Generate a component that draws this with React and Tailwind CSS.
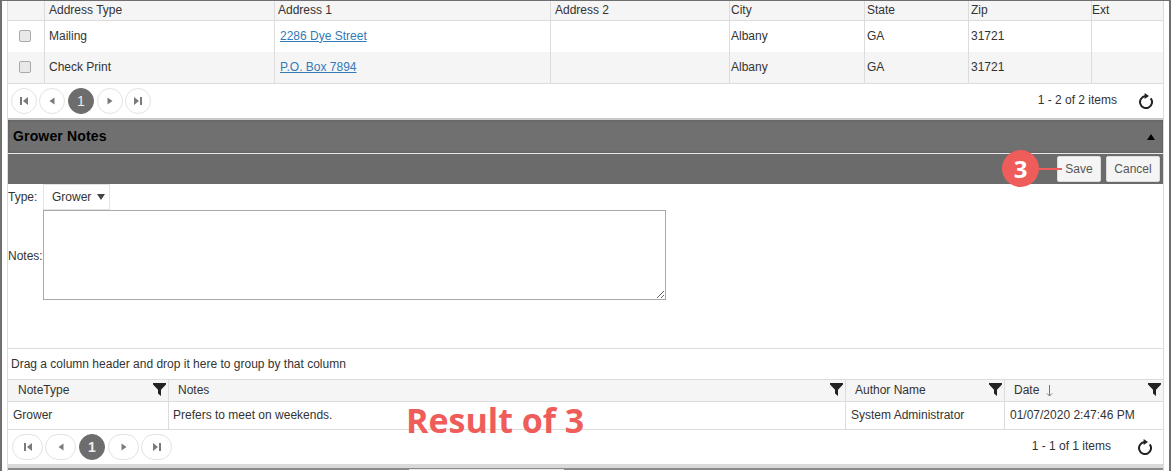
import React from "react";

const Pg = ({ kind }) => {
  const paths = {
    first: <><rect x="2" y="2" width="2" height="8" /><path d="M10 2v8L5 6z" /></>,
    prev: <path d="M8.5 2.5v7L3.5 6z" />,
    next: <path d="M3.5 2.5v7L8.5 6z" />,
    last: <><rect x="8" y="2" width="2" height="8" /><path d="M2 2v8l5-4z" /></>,
  };
  return (
    <svg width="12" height="12" viewBox="0 0 12 12" className="fill-[#7a7a7a]">
      {paths[kind]}
    </svg>
  );
};

const Refresh = () => (
  <svg width="16" height="16" viewBox="0 0 16 16" fill="none" className="stroke-[#222]">
    <path d="M7.5 3.1A6 6 0 1 0 12.7 5.3" strokeWidth="2" />
    <path d="M6.6 0v6l4.4-3z" className="fill-[#222]" stroke="none" />
  </svg>
);

const Funnel = () => (
  <svg width="13" height="13" viewBox="0 0 13 13" className="fill-[#222]">
    <path d="M0 0h13v1.6L8 6.8V13L5 10.6V6.8L0 1.6z" />
  </svg>
);

const PagerBtn = ({ children, w, active, bold }) => (
  <span
    className={`flex h-[26px] items-center justify-center rounded-full border text-sm ${
      active ? "border-[#6d6d6d] bg-[#6d6d6d] text-[#eee]" : "border-[#e3e3e3] bg-white"
    } ${bold ? "font-bold" : "font-normal"}`}
    style={{ width: w }}
  >
    {children}
  </span>
);

const Pager = ({ label, widths, bold, className, labelClass, refreshClass }) => (
  <div className={`flex h-[35px] items-center border-t border-[#dcdcdc] ${className}`}>
    <PagerBtn w={widths[0]}><Pg kind="first" /></PagerBtn>
    <span className="w-[2px]" />
    <PagerBtn w={widths[1]}><Pg kind="prev" /></PagerBtn>
    <span className="w-[3px]" />
    <PagerBtn w={26} active bold={bold}>1</PagerBtn>
    <span className="w-[3px]" />
    <PagerBtn w={widths[2]}><Pg kind="next" /></PagerBtn>
    <span className="w-[2px]" />
    <PagerBtn w={widths[3]}><Pg kind="last" /></PagerBtn>
    <span className={`ml-auto pb-[2px] text-xs text-[#333] ${labelClass}`}>{label}</span>
    <span className={`flex ${refreshClass}`}><Refresh /></span>
  </div>
);

const addrCols = "grid grid-cols-[37px_230px_276px_179px_135px_104px_123px_1fr]";
const cell = "flex items-center border-r border-[#dcdcdc] last:border-r-0";

const Checkbox = () => (
  <span className="mx-auto block h-3 w-3 rounded-[2px] border border-[#a9a9a9] bg-[#e9e9e9]" />
);

const AddrRow = ({ type, addr, bg }) => (
  <div className={`${addrCols} h-[31px] text-xs text-[#333] ${bg}`}>
    <div className={`${cell} pr-[2px] pb-[2px]`}><Checkbox /></div>
    <div className={`${cell} pb-[2px] pl-[4px]`}>{type}</div>
    <div className={`${cell} pb-[2px] pl-[5px]`}>
      <a href="#" className="text-[#337ab7] underline">{addr}</a>
    </div>
    <div className={cell} />
    <div className={`${cell} pb-[2px] pl-[1px]`}>Albany</div>
    <div className={`${cell} pb-[2px] pl-[2px]`}>GA</div>
    <div className={`${cell} pb-[2px] pl-[2px]`}>31721</div>
    <div className={cell} />
  </div>
);

const noteCols = "grid grid-cols-[161px_677px_159px_1fr]";

const NoteHead = ({ children, last, first }) => (
  <div className={`flex items-center ${last ? "" : "border-r border-[#dcdcdc]"} ${first ? "pl-[10px]" : "pl-[9px]"} pr-[2px]`}>
    <span className="flex-1 pb-[2px]">{children}</span>
    <span className="-mt-[2px] flex"><Funnel /></span>
  </div>
);

export default function App() {
  return (
    <div className="relative h-[471px] w-[1171px] overflow-hidden border-x-2 border-t border-[#6f6f6f] bg-white font-['Liberation_Sans',Arial,sans-serif]">
      <div className="mx-[5px] h-[470px] border-x border-[#dcdcdc]">
        <div className={`${addrCols} h-[20px] border-b border-[#dcdcdc] bg-[#f5f5f5] text-xs text-[#333]`}>
          <div className={cell} />
          <div className={`${cell} pb-[2px] pl-[4px]`}>Address Type</div>
          <div className={`${cell} pb-[2px] pl-[3px]`}>Address 1</div>
          <div className={`${cell} pb-[2px] pl-[4px]`}>Address 2</div>
          <div className={`${cell} pb-[2px] pl-[1px]`}>City</div>
          <div className={`${cell} pb-[2px] pl-[2px]`}>State</div>
          <div className={`${cell} pb-[2px] pl-[2px]`}>Zip</div>
          <div className={`${cell} pb-[2px]`}>Ext</div>
        </div>
        <AddrRow type="Mailing" addr="2286 Dye Street" bg="bg-white" />
        <AddrRow type="Check Print" addr="P.O. Box 7894" bg="bg-[#f5f5f5]" />
        <Pager
          label="1 - 2 of 2 items"
          widths={[26, 26, 26, 26]}
          className="pl-[3px]"
          labelClass="mr-[21px]"
          refreshClass="mr-[9px]"
        />
        <div className="flex h-[35px] items-center justify-between border-t-2 border-[#c9c9c9] bg-[#707070] pl-[5px] pr-[8px] shadow-[inset_0_0_3px_#555]">
          <span className="pb-[2px] text-sm font-bold tracking-[0.15px] text-black">Grower Notes</span>
          <svg width="8" height="6" viewBox="0 0 8 6" className="fill-black"><path d="M4 0l4 6H0z" /></svg>
        </div>
        <div className="flex h-[31px] items-center justify-end gap-[5px] border-t border-[#e8e8e8] bg-[#6b6b6b] pr-[3px]">
          <button className="h-[26px] w-[44px] rounded-[2px] border border-[#dcdcdc] bg-[#f5f5f5] text-xs text-[#555]">Save</button>
          <button className="h-[26px] w-[54px] rounded-[2px] border border-[#dcdcdc] bg-[#f5f5f5] text-xs text-[#555]">Cancel</button>
        </div>
        <div className="flex h-[26px] items-center text-xs text-[#333]">
          <span className="w-[35px]">Type:</span>
          <span className="flex h-[26px] w-[67px] items-center border border-[#e3e3e3] pl-[8px]">
            Grower
            <svg width="8" height="6" viewBox="0 0 8 6" className="ml-[6px] fill-[#444]"><path d="M0 0h8L4 6z" /></svg>
          </span>
        </div>
        <div className="flex h-[90px] items-center text-xs text-[#333]">
          <span className="w-[35px] pt-[2px]">Notes:</span>
          <textarea className="h-[90px] w-[623px] resize border border-[#a9a9a9] bg-white" readOnly />
        </div>
        <div className="h-[48px]" />
        <div className="flex h-[31px] items-center border-t border-[#dcdcdc] pl-[3px] text-xs text-[#333]">
          Drag a column header and drop it here to group by that column
        </div>
        <div className={`${noteCols} h-[23px] border-y border-[#dcdcdc] bg-[#f5f5f5] text-xs text-[#333]`}>
          <NoteHead first>NoteType</NoteHead>
          <NoteHead>Notes</NoteHead>
          <NoteHead>Author Name</NoteHead>
          <NoteHead last>
            <span className="flex items-center">
              Date
              <svg width="9" height="12" viewBox="0 0 9 12" fill="none" className="ml-[6px] mt-[3px] stroke-[#777]">
                <path d="M4.5 0v11M2 8.5l2.5 2.5L7 8.5" />
              </svg>
            </span>
          </NoteHead>
        </div>
        <div className={`${noteCols} h-[27px] text-xs text-[#333]`}>
          <div className={`${cell} pb-[2px] pl-[5px]`}>Grower</div>
          <div className={`${cell} pb-[2px] pl-[4px]`}>Prefers to meet on weekends.</div>
          <div className={`${cell} pb-[2px] pl-[5px]`}>System Administrator</div>
          <div className={`${cell} pb-[2px] pl-[5px]`}>01/07/2020 2:47:46 PM</div>
        </div>
        <Pager
          label="1 - 1 of 1 items"
          widths={[31, 31, 31, 31]}
          bold
          className="pl-[4px]"
          labelClass="mr-[26px]"
          refreshClass="mr-[10px]"
        />
        <div className="h-[4px] bg-[#d9d9d9]" />
        <div className="relative h-[2px] bg-[#8a8a8a]">
          <div className="absolute left-[401px] top-[1px] h-[1px] w-[155px] bg-[#e8e8e8]" />
        </div>
      </div>

      <div className="absolute left-[1000px] top-[149px] flex items-center">
        <span className="flex h-[37px] w-[37px] items-center justify-center rounded-full bg-[#ef5d5a] font-['Open_Sans',sans-serif] text-2xl font-bold text-white">3</span>
        <span className="h-[2px] w-[23px] bg-[#ef5d5a]" />
      </div>
      <span className="absolute left-[404px] top-[397px] font-['Open_Sans',sans-serif] text-[34px] leading-[44px] font-bold text-[#ef5d5a]">Result of 3</span>
    </div>
  );
}
